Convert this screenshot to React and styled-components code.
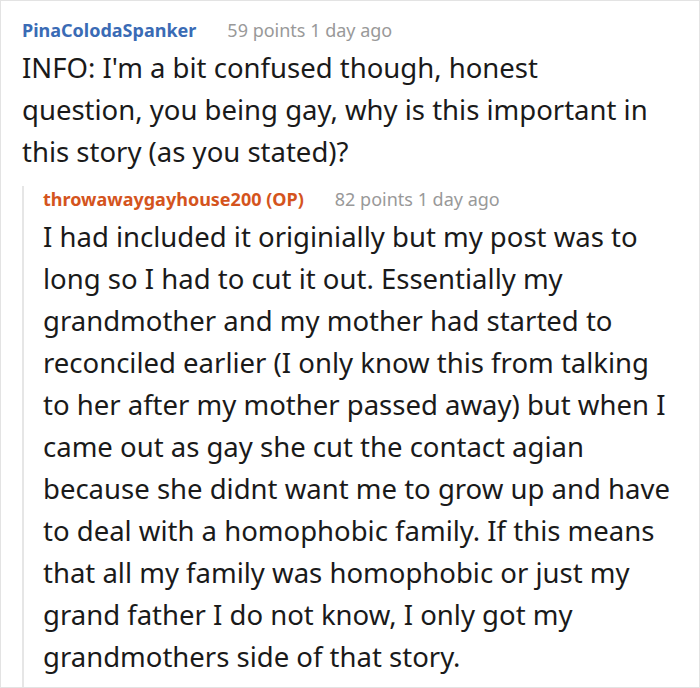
import React from 'react';
import styled, { createGlobalStyle } from 'styled-components';

const GlobalStyle = createGlobalStyle`
  html, body {
    margin: 0;
    padding: 0;
    background: #ffffff;
  }
  body {
    font-family: "Noto Sans", "Open Sans", sans-serif;
  }
`;

const comment = {
  author: 'PinaColodaSpanker',
  points: 59,
  age: '1 day ago',
  body: "INFO: I'm a bit confused though, honest question, you being gay, why is this important in this story (as you stated)?",
  reply: {
    author: 'throwawaygayhouse200 (OP)',
    points: 82,
    age: '1 day ago',
    body: "I had included it originially but my post was to long so I had to cut it out. Essentially my grandmother and my mother had started to reconciled earlier (I only know this from talking to her after my mother passed away) but when I came out as gay she cut the contact agian because she didnt want me to grow up and have to deal with a homophobic family. If this means that all my family was homophobic or just my grand father I do not know, I only got my grandmothers side of that story.",
  },
};

const Frame = styled.div`
  width: 700px;
  height: 688px;
  box-sizing: border-box;
  border: 1.5px solid #e3e3e3;
  padding: 16px 0 0 21px;
  overflow: hidden;
`;

const Meta = styled.div`
  display: flex;
  align-items: baseline;
  gap: 31px;
  font-size: 18px;
  line-height: 26px;
`;

const Author = styled.span`
  font-weight: 700;
  color: ${(p) => (p.$op ? '#d4541d' : '#3a6bb5')};
`;

const Points = styled.span`
  color: #999999;
`;

const Body = styled.p`
  margin: 4px 0 0;
  max-width: ${(p) => p.$max}px;
  color: #1a1a1a;
  font-size: 27.5px;
  line-height: 42px;
`;

const Reply = styled.div`
  margin-top: 13px;
  border-left: 2px solid #e6e6e6;
  padding: 0 0 10px 19px;
`;

const CommentBlock = ({ data, op, max }) => (
  <>
    <Meta>
      <Author $op={op}>{data.author}</Author>
      <Points>
        {data.points} points {data.age}
      </Points>
    </Meta>
    <Body $max={max}>{data.body}</Body>
  </>
);

export default function App() {
  return (
    <>
      <GlobalStyle />
      <Frame>
        <CommentBlock data={comment} max={640} />
        <Reply>
          <CommentBlock data={comment.reply} op max={634} />
        </Reply>
      </Frame>
    </>
  );
}
